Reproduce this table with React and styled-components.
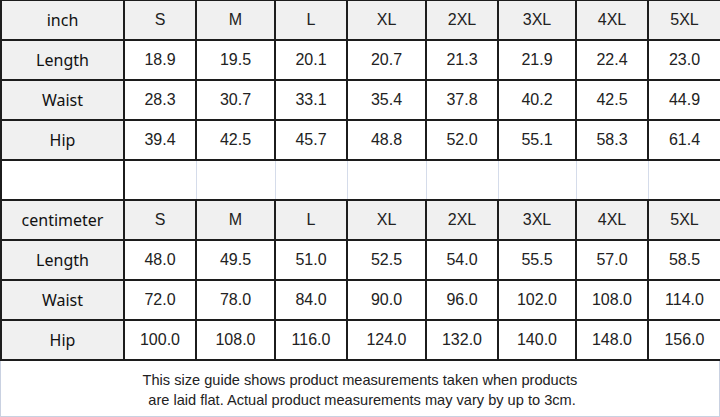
import React from "react";
import styled, { createGlobalStyle } from "styled-components";

const GlobalStyle = createGlobalStyle`
  html, body {
    margin: 0;
    padding: 0;
    background: #ffffff;
  }
`;

const WIDTHS = [123, 72, 79, 72, 79, 72, 78, 72, 73];
const SIZES = ["S", "M", "L", "XL", "2XL", "3XL", "4XL", "5XL"];

const INCH = [
  ["Length", ["18.9", "19.5", "20.1", "20.7", "21.3", "21.9", "22.4", "23.0"]],
  ["Waist", ["28.3", "30.7", "33.1", "35.4", "37.8", "40.2", "42.5", "44.9"]],
  ["Hip", ["39.4", "42.5", "45.7", "48.8", "52.0", "55.1", "58.3", "61.4"]],
];

const CM = [
  ["Length", ["48.0", "49.5", "51.0", "52.5", "54.0", "55.5", "57.0", "58.5"]],
  ["Waist", ["72.0", "78.0", "84.0", "90.0", "96.0", "102.0", "108.0", "114.0"]],
  ["Hip", ["100.0", "108.0", "116.0", "124.0", "132.0", "140.0", "148.0", "156.0"]],
];

const Page = styled.div`
  width: 720px;
  height: 417px;
  display: flex;
  flex-direction: column;
  overflow: hidden;
`;

const Sheet = styled.table`
  width: 720px;
  margin-top: -1px;
  border-collapse: collapse;
  table-layout: fixed;
`;

const Row = styled.tr`
  height: 40px;
`;

const Cell = styled.td`
  border: 2px solid #1c1c1c;
  padding: 0;
  text-align: center;
  vertical-align: middle;
  background: ${(p) => (p.$shade ? "#f0f0f0" : "#ffffff")};
  font-family: ${(p) =>
    p.$label ? '"Noto Sans", "Open Sans", sans-serif' : '"Liberation Sans", Arial, sans-serif'};
  font-size: 16px;
  color: ${(p) => (p.$label ? "#111111" : "#222222")};
  line-height: 1;
`;

const BlankCell = styled.td`
  border-top: 2px solid #1c1c1c;
  border-bottom: 2px solid #1c1c1c;
  border-left: ${(p) => (p.$first ? "2px solid #1c1c1c" : "1px solid #d5dcea")};
  border-right: ${(p) => (p.$first ? "2px solid #1c1c1c" : "1px solid #d5dcea")};
  background: #ffffff;
  padding: 0;
`;

const Note = styled.div`
  flex: 1;
  border: 1px solid #c9d1e1;
  border-top: none;
  padding-top: 9px;
  font-family: "Liberation Sans", Arial, sans-serif;
  font-size: 14.6px;
  line-height: 20px;
  color: #222222;
  text-align: center;
`;

const Block = ({ unit, rows }) => (
  <>
    <Row>
      <Cell $shade $label>{unit}</Cell>
      {SIZES.map((s) => (
        <Cell key={s} $shade>{s}</Cell>
      ))}
    </Row>
    {rows.map(([name, values]) => (
      <Row key={name}>
        <Cell $shade $label>{name}</Cell>
        {values.map((v, i) => (
          <Cell key={i}>{v}</Cell>
        ))}
      </Row>
    ))}
  </>
);

const App = () => (
  <>
    <GlobalStyle />
    <Page>
      <Sheet>
        <colgroup>
          {WIDTHS.map((w, i) => (
            <col key={i} style={{ width: w }} />
          ))}
        </colgroup>
        <tbody>
          <Block unit="inch" rows={INCH} />
          <Row>
            {WIDTHS.map((_, i) => (
              <BlankCell key={i} $first={i === 0} />
            ))}
          </Row>
          <Block unit="centimeter" rows={CM} />
        </tbody>
      </Sheet>
      <Note>
        This size guide shows product measurements taken when products
        <br />
        &nbsp;are laid flat. Actual product measurements may vary by up to 3cm.
      </Note>
    </Page>
  </>
);

export default App;
